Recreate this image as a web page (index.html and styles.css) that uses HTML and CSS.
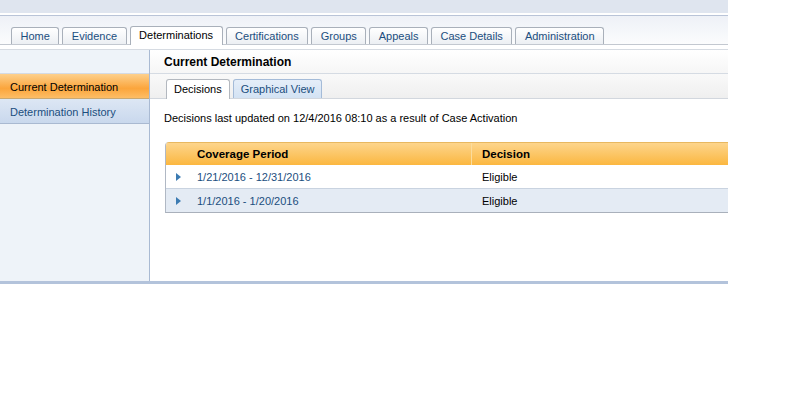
FILE: index.html
```html
<!DOCTYPE html>
<html>
<head>
<meta charset="utf-8">
<link rel="stylesheet" href="styles.css">
</head>
<body>
<div class="page">
  <div class="topband"></div>
  <div class="tabbar">
    <div class="tab">Home</div>
    <div class="tab">Evidence</div>
    <div class="tab active">Determinations</div>
    <div class="tab">Certifications</div>
    <div class="tab">Groups</div>
    <div class="tab">Appeals</div>
    <div class="tab">Case Details</div>
    <div class="tab">Administration</div>
  </div>
  <div class="gap"></div>
  <div class="workspace">
    <div class="sidebar">
      <div class="side-top"></div>
      <div class="side-item selected">Current Determination</div>
      <div class="side-item">Determination History</div>
    </div>
    <div class="main">
      <div class="main-head">Current Determination</div>
      <div class="subtabs">
        <div class="subtab active">Decisions</div>
        <div class="subtab">Graphical View</div>
      </div>
      <div class="info">Decisions last updated on 12/4/2016 08:10 as a result of Case Activation</div>
      <div class="grid">
        <div class="grid-head">
          <div class="cell c1">Coverage Period</div>
          <div class="cell c2">Decision</div>
        </div>
        <div class="grid-row">
          <div class="cell c1"><span class="arrow"></span><span class="link">1/21/2016 - 12/31/2016</span></div>
          <div class="cell c2">Eligible</div>
        </div>
        <div class="grid-row alt">
          <div class="cell c1"><span class="arrow"></span><span class="link">1/1/2016 - 1/20/2016</span></div>
          <div class="cell c2">Eligible</div>
        </div>
      </div>
    </div>
  </div>
  <div class="bottomline"></div>
</div>
</body>
</html>
```
FILE: styles.css
```css
html, body {
  margin: 0;
  padding: 0;
  background: #ffffff;
}
body {
  font-family: "Liberation Sans", Arial, sans-serif;
  font-size: 11px;
  color: #000;
}
.page {
  width: 728px;
}
.topband {
  height: 13px;
  background: #dfe5ef;
  border-bottom: 2px solid #ffffff;
}
.tabbar {
  height: 28px;
  border-top: 1px solid #b9c4d8;
  border-bottom: 1px solid #c3c8d0;
  background: linear-gradient(#eef1f7, #fbfcfd);
  display: flex;
  align-items: flex-end;
  padding-left: 11px;
  gap: 3px;
}
.tab {
  height: 16px;
  line-height: 16px;
  padding: 0 8.5px;
  border: 1px solid #a9b0ba;
  border-bottom: none;
  border-radius: 3px 3px 0 0;
  background: linear-gradient(#ffffff, #eceff3);
  color: #1b4e7e;
}
.tab.active {
  height: 17px;
  background: #ffffff;
  color: #000;
  margin-bottom: -1px;
  padding-bottom: 1px;
}
.gap {
  height: 4px;
  background: #ffffff;
  border-bottom: 1px solid #d6dbe2;
}
.workspace {
  display: flex;
  height: 231px;
}
.sidebar {
  width: 149px;
  border-right: 1px solid #a9bad3;
  background: #eef3f9;
}
.side-top {
  height: 23px;
  border-bottom: 1px solid #d4dae3;
}
.side-item {
  height: 24px;
  line-height: 26px;
  padding-left: 10px;
  color: #1b4e7e;
  background: linear-gradient(#dde7f4, #c9d8ed);
  border-bottom: 1px solid #a9b9d1;
}
.side-item.selected {
  color: #000;
  background: linear-gradient(#fdd08c, #fba53c 60%, #fdbd66);
  border-bottom: 1px solid #c9a872;
}
.main {
  flex: 1;
  background: #ffffff;
}
.main-head {
  height: 23px;
  line-height: 24px;
  padding-left: 14px;
  font-weight: bold;
  font-size: 12px;
  background: linear-gradient(#ffffff, #f6f6f6);
  border-bottom: 1px solid #d5dbe3;
}
.subtabs {
  height: 19px;
  padding-top: 5px;
  padding-left: 16px;
  display: flex;
  align-items: flex-end;
  gap: 3px;
  background: linear-gradient(#f9f9f9, #efefef);
  border-bottom: 1px solid #d2d7de;
}
.subtab {
  height: 18px;
  line-height: 19px;
  padding: 0 7px;
  border: 1px solid #a4bbd8;
  border-bottom: none;
  border-radius: 3px 3px 0 0;
  background: linear-gradient(#e5eef9, #d3e2f3);
  color: #1b4e7e;
}
.subtab.active {
  height: 19px;
  margin-bottom: -1px;
  background: #ffffff;
  border-color: #b3b8bf;
  color: #000;
}
.info {
  padding: 13px 0 0 14px;
  height: 31px;
  line-height: 13px;
  box-sizing: border-box;
}
.grid {
  margin-top: 12px;
  margin-left: 15px;
  border-left: 1px solid #b0b8c4;
  border-bottom: 1px solid #a9b0bb;
  border-top-left-radius: 4px;
  overflow: hidden;
}
.grid-head {
  display: flex;
  height: 22px;
  line-height: 22px;
  font-weight: bold;
  font-size: 11.5px;
  background: linear-gradient(#fdd58c, #fbb740);
  border-top: 1px solid #e8b860;
}
.grid-row {
  display: flex;
  height: 23px;
  line-height: 25px;
  background: #ffffff;
  border-bottom: 1px solid #c9d3e0;
}
.grid-row.alt {
  background: #e4ebf4;
  border-bottom: none;
}
.cell {
  box-sizing: border-box;
}
.c1 {
  width: 306px;
  padding-left: 31px;
  position: relative;
}
.grid-head .c1 {
  border-right: 1px solid #fbdc9c;
}
.c2 {
  flex: 1;
  padding-left: 10px;
}
.arrow {
  position: absolute;
  left: 10px;
  top: 8px;
  width: 0;
  height: 0;
  border-left: 5px solid #3c7bb2;
  border-top: 4px solid transparent;
  border-bottom: 4px solid transparent;
}
.link {
  color: #1b4e7e;
}
.bottomline {
  height: 3px;
  background: #b3c3db;
}
```
